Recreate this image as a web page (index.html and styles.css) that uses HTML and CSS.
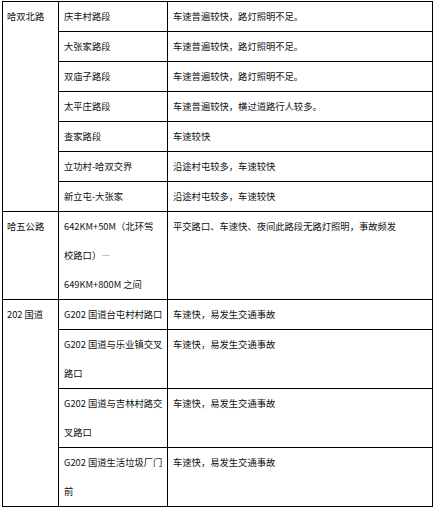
FILE: index.html
```html
<!DOCTYPE html>
<html lang="zh">
<head>
<meta charset="utf-8">
<title>路段</title>
<link rel="stylesheet" href="styles.css">
</head>
<body>
<table class="road-table">
  <colgroup>
    <col class="c-road">
    <col class="c-seg">
    <col class="c-desc">
  </colgroup>
  <tbody>
    <tr>
      <td class="road" rowspan="7">哈双北路</td>
      <td class="seg">庆丰村路段</td>
      <td>车速普遍较快，路灯照明不足。</td>
    </tr>
    <tr>
      <td class="seg">大张家路段</td>
      <td>车速普遍较快，路灯照明不足。</td>
    </tr>
    <tr>
      <td class="seg">双庙子路段</td>
      <td>车速普遍较快，路灯照明不足。</td>
    </tr>
    <tr>
      <td class="seg">太平庄路段</td>
      <td>车速普遍较快，横过道路行人较多。</td>
    </tr>
    <tr>
      <td class="seg">查家路段</td>
      <td>车速较快</td>
    </tr>
    <tr>
      <td class="seg">立功村-哈双交界</td>
      <td>沿途村屯较多，车速较快</td>
    </tr>
    <tr>
      <td class="seg">新立屯-大张家</td>
      <td>沿途村屯较多，车速较快</td>
    </tr>
    <tr>
      <td class="road">哈五公路</td>
      <td class="seg">642KM+50M（北环驾<br>校路口）—<br>649KM+800M 之间</td>
      <td>平交路口、车速快、夜间此路段无路灯照明，事故频发</td>
    </tr>
    <tr>
      <td class="road" rowspan="4">202 国道</td>
      <td class="seg">G202 国道台屯村村路口</td>
      <td>车速快，易发生交通事故</td>
    </tr>
    <tr>
      <td class="seg">G202 国道与乐业镇交叉<br>路口</td>
      <td>车速快，易发生交通事故</td>
    </tr>
    <tr>
      <td class="seg">G202 国道与吉林村路交<br>叉路口</td>
      <td>车速快，易发生交通事故</td>
    </tr>
    <tr>
      <td class="seg">G202 国道生活垃圾厂门<br>前</td>
      <td>车速快，易发生交通事故</td>
    </tr>
    <tr>
      <td class="road">&nbsp;</td>
      <td class="seg">&nbsp;</td>
      <td>&nbsp;</td>
    </tr>
  </tbody>
</table>
</body>
</html>
```

FILE: styles.css
```css
html, body {
  background: #ffffff;
}

body {
  margin: 1px 0 0 2px;
  font-family: "Noto Sans CJK SC", "Noto Sans", sans-serif;
  font-size: 9.3px;
  color: #111111;
}

.road-table {
  border-collapse: collapse;
  table-layout: fixed;
  width: 430px;
}

.c-road { width: 56px; }
.c-seg { width: 109px; }
.c-desc { width: 265px; }

.road-table td {
  border: 1px solid #000000;
  padding: 0 2px 0 5px;
  line-height: 29px;
  vertical-align: top;
  overflow: hidden;
}

.road-table td.seg {
  white-space: nowrap;
}

.road-table td.road {
  padding-left: 4px;
}
```
